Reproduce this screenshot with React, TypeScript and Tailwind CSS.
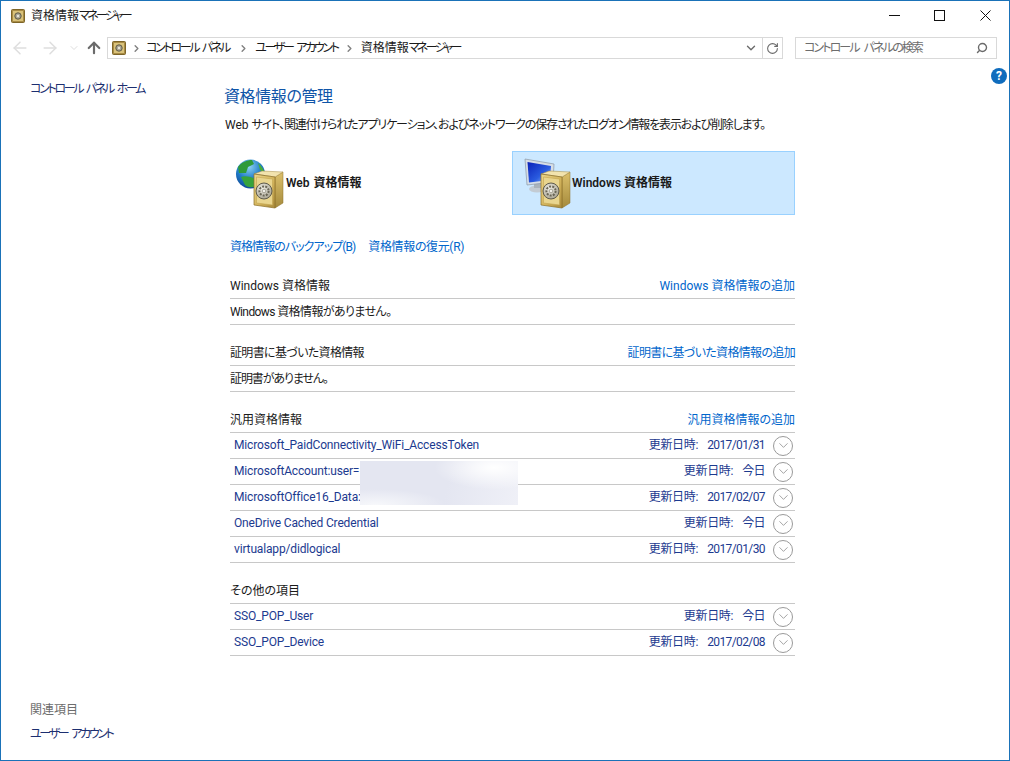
import { ArrowLeft, ArrowRight, ArrowUp, ChevronDown, ChevronRight, RotateCw, Search } from "lucide-react";
import type { ReactNode } from "react";

type Row = { name: string; date: string };

const generic: Row[] = [
  { name: "Microsoft_PaidConnectivity_WiFi_AccessToken", date: "2017/01/31" },
  { name: "MicrosoftAccount:user=", date: "今日" },
  { name: "MicrosoftOffice16_Data:", date: "2017/02/07" },
  { name: "OneDrive Cached Credential", date: "今日" },
  { name: "virtualapp/didlogical", date: "2017/01/30" },
];

const others: Row[] = [
  { name: "SSO_POP_User", date: "今日" },
  { name: "SSO_POP_Device", date: "2017/02/08" },
];

// Kana in the original UI font is much narrower than in Noto
function Kana({ children }: { children: ReactNode }) {
  return <span className="tracking-[-2.3px] [word-spacing:3px]">{children}</span>;
}

function AppName() {
  return (
    <>
      資格情報<span className="tracking-[-2.6px]">マネージャー</span>
    </>
  );
}

function SmallSafe() {
  return (
    <svg width="14" height="14" viewBox="0 0 14 14" className="shrink-0">
      <rect x="0.5" y="0.5" width="13" height="13" rx="1" fill="#a98c45" stroke="#7d6528" />
      <rect x="2" y="2" width="10" height="10" fill="#d9c27a" />
      <circle cx="7" cy="7" r="3.2" fill="#a9a594" stroke="#5f5a45" />
      <circle cx="7" cy="7" r="1.2" fill="#e8e6da" />
    </svg>
  );
}

function BigSafe() {
  return (
    <g>
      <path d="M40 21 L48 16 L48 47 L40 52 Z" fill="url(#safeSide)" stroke="#8c7029" strokeWidth="0.5" />
      <path d="M19 18 L27 15 L48 16 L40 21 Z" fill="#f2e3ae" stroke="#a58a40" strokeWidth="0.5" />
      <path d="M19 18 L40 21 L40 52 L19 49 Z" fill="url(#safeFront)" stroke="#8c7029" strokeWidth="0.7" />
      <path d="M21.5 21 L37.5 23 L37.5 49 L21.5 47 Z" fill="#e9d58e" stroke="#c3a551" strokeWidth="0.6" />
      <circle cx="29" cy="35" r="8" fill="url(#dial)" stroke="#5f5b4c" strokeWidth="1" />
      <circle cx="29" cy="35" r="4.6" fill="none" stroke="#6a6656" strokeWidth="2" strokeDasharray="2 1.2" />
      <circle cx="29" cy="35" r="1.8" fill="#f2f1ea" stroke="#6a6656" strokeWidth="0.5" />
    </g>
  );
}

function Defs() {
  return (
    <defs>
      <linearGradient id="safeFront" x1="0" y1="0" x2="1" y2="1">
        <stop offset="0" stopColor="#ecd68c" />
        <stop offset="0.55" stopColor="#d3b45c" />
        <stop offset="1" stopColor="#a98a3a" />
      </linearGradient>
      <linearGradient id="safeSide" x1="0" y1="0" x2="0" y2="1">
        <stop offset="0" stopColor="#dcc06c" />
        <stop offset="1" stopColor="#a58a3c" />
      </linearGradient>
      <radialGradient id="dial" cx="0.4" cy="0.35" r="0.8">
        <stop offset="0" stopColor="#f1f0e8" />
        <stop offset="1" stopColor="#9a9582" />
      </radialGradient>
      <radialGradient id="sea" cx="0.45" cy="0.25" r="0.85">
        <stop offset="0" stopColor="#8fd2f2" />
        <stop offset="0.5" stopColor="#1f7cc8" />
        <stop offset="1" stopColor="#0c3a8a" />
      </radialGradient>
      <linearGradient id="screen" x1="0" y1="0" x2="1" y2="1">
        <stop offset="0" stopColor="#0a20b8" />
        <stop offset="0.6" stopColor="#2a5ce0" />
        <stop offset="1" stopColor="#a4c2f6" />
      </linearGradient>
    </defs>
  );
}

function WebIcon() {
  return (
    <svg width="50" height="54" viewBox="0 0 50 54" className="shrink-0">
      <Defs />
      <circle cx="15.5" cy="18" r="14.5" fill="url(#sea)" />
      <path d="M3 11 C7 6 12 4 17 4 L19 8 L13 11 L11 17 L4 17 Z" fill="#2f9a3a" />
      <path d="M6 21 C12 19 20 22 26 27 C22 31 14 33 10 29 Z" fill="#37a33c" />
      <path d="M23 7 C27 10 29 14 30 18 L25 14 Z" fill="#46ad3e" />
      <BigSafe />
    </svg>
  );
}

function WindowsIcon() {
  return (
    <svg width="50" height="54" viewBox="0 0 50 54" className="shrink-0">
      <Defs />
      <ellipse cx="15" cy="33" rx="8" ry="3.5" fill="#c3cbd3" />
      <path d="M12 26 L19 26 L19 32 L12 32 Z" fill="#aab3bc" />
      <path d="M3 3 L32 8 L31 26 L5 29 Z" fill="#d6dde6" stroke="#8a98a8" strokeWidth="0.7" />
      <path d="M5.5 6 L29 10 L28 24 L7 26.5 Z" fill="url(#screen)" />
      <BigSafe />
    </svg>
  );
}

function ExpandButton() {
  return (
    <span className="flex h-[20px] w-[20px] items-center justify-center rounded-full border border-[#9a9a9a] bg-white">
      <ChevronDown size={15} strokeWidth={1.1} className="text-[#7a7a7a]" />
    </span>
  );
}

function CredRow({ row }: { row: Row }) {
  return (
    <div className="flex h-[26px] items-center border-b border-[#c8c8c8] pl-1 pr-[2px] text-[#1c3a8f]">
      <span className="mb-[2px] flex-1 tracking-[-0.16px]">{row.name}</span>
      <span className="mb-[2px] mr-[8px] flex w-[120px] justify-end whitespace-nowrap">
        <span className="mr-[9px] tracking-[-0.3px]">更新日時:</span>
        <span className="tracking-[-0.6px]">{row.date}</span>
      </span>
      <ExpandButton />
    </div>
  );
}

function SectionHead({ title, action, squeeze }: { title: string; action?: string; squeeze?: boolean }) {
  return (
    <div className={`flex h-[28px] items-end justify-between border-b border-[#c8c8c8] pb-[4px] ${squeeze ? "tracking-[-0.67px]" : ""}`}>
      <span className="text-[#1a1a1a]">{title}</span>
      {action && <span className="text-[#0066cc]">{action}</span>}
    </div>
  );
}

export default function App() {
  return (
    <div className="relative flex h-[761px] w-[1010px] flex-col overflow-hidden border border-[#1a72b8] bg-white font-['Roboto','Noto_Sans_CJK_JP',sans-serif] text-[12px] leading-4 text-[#1a1a1a] [font-feature-settings:'palt']">
      <div className="flex h-[30px] shrink-0 items-center pl-[10px]">
        <SmallSafe />
        <span className="ml-[6px]">
          <AppName />
        </span>
        <div className="mb-[2px] ml-auto flex items-center text-black">
          <svg width="11" height="11" viewBox="0 0 11 11" className="mr-[34px]">
            <path d="M0 5.5H11" stroke="#111" />
          </svg>
          <svg width="11" height="11" viewBox="0 0 11 11" className="mr-[35px]">
            <rect x="0.5" y="0.5" width="10" height="10" fill="none" stroke="#111" />
          </svg>
          <svg width="11" height="11" viewBox="0 0 11 11" className="mr-[18px]">
            <path d="M0.5 0.5L10.5 10.5M10.5 0.5L0.5 10.5" stroke="#111" />
          </svg>
        </div>
      </div>

      <div className="flex h-[34px] shrink-0 items-start pt-[6px]">
        <div className="flex h-[22px] w-[106px] shrink-0 items-center pl-[9px]">
          <ArrowLeft size={20} strokeWidth={1.8} className="shrink-0 text-[#dedede]" />
          <ArrowRight size={20} strokeWidth={1.8} className="ml-[10px] shrink-0 text-[#dedede]" />
          <ChevronDown size={12} strokeWidth={2} className="ml-[8px] shrink-0 text-[#dedede]" />
          <ArrowUp size={18} strokeWidth={2.9} className="ml-[5px] shrink-0 text-[#6b6b6b]" />
        </div>
        <div className="flex h-[22px] w-[676px] shrink-0 items-center border border-[#d9d9d9] pl-[4px]">
          <SmallSafe />
          <ChevronRight size={11} strokeWidth={3} className="ml-[5px] text-[#808080]" />
          <span className="ml-[4px]">
            <Kana>コントロール パネル</Kana>
          </span>
          <ChevronRight size={11} strokeWidth={3} className="ml-[9px] text-[#808080]" />
          <span className="ml-[6px]">
            <Kana>ユーザー アカウント</Kana>
          </span>
          <ChevronRight size={11} strokeWidth={3} className="ml-[6px] text-[#808080]" />
          <span className="ml-[6px]">
            <AppName />
          </span>
          <div className="ml-auto flex h-full items-center">
            <ChevronDown size={14} strokeWidth={2.4} className="mr-[4px] text-[#6b6b6b]" />
            <div className="flex h-full w-[20px] items-center justify-center border-l border-[#d9d9d9]">
              <RotateCw size={13} strokeWidth={2} className="text-[#6b6b6b]" />
            </div>
          </div>
        </div>
        <div className="ml-[12px] flex h-[22px] w-[202px] shrink-0 items-center justify-between border border-[#d9d9d9] pl-[8px] pr-[8px] text-[#6d6d6d]">
          <span className="tracking-[-1.9px] [word-spacing:4px]">コントロール パネルの検索</span>
          <Search size={12} strokeWidth={2.8} className="-scale-x-100 text-[#6b6b6b]" />
        </div>
      </div>

      <div className="relative flex min-h-0 flex-1">
        <aside className="flex w-[224px] shrink-0 flex-col justify-between pb-[18px] pl-[29px] pt-[16px]">
          <span className="text-[#1c2f70]">
            <Kana>コントロール パネル ホーム</Kana>
          </span>
          <div className="flex flex-col gap-2">
            <span className="text-[#6d6d6d]">関連項目</span>
            <span className="text-[#1c2f70]">
              <Kana>ユーザー アカウント</Kana>
            </span>
          </div>
        </aside>

        <main className="w-[572px] shrink-0 pt-[21px]">
          <h1 className="-ml-px text-[16px] leading-[22px] tracking-[-0.4px] text-[#0f55a8]">資格情報の管理</h1>
          <p className="mt-[9px] whitespace-nowrap tracking-[-1.14px]">
            <span className="tracking-normal">Web </span>
            サイト、関連付けられたアプリケーション、およびネットワークの保存されたログオン情報を表示および削除します。
          </p>

          <div className="mt-[18px] flex h-[64px] gap-[5px] font-semibold">
            <div className="flex w-[282px] items-center pl-[10px]">
              <WebIcon />
              <span className="ml-px [word-spacing:1px]">Web 資格情報</span>
            </div>
            <div className="flex w-[283px] items-center border border-[#99d1ff] bg-[#cce8ff] pl-[9px]">
              <WindowsIcon />
              <span>Windows 資格情報</span>
            </div>
          </div>

          <div className="ml-[5px] w-[565px]">
            <div className="mt-[24px] flex gap-[13px] text-[#0066cc]">
              <span className="tracking-[-0.95px]">資格情報のバックアップ(B)</span>
              <span className="tracking-[-0.35px]">資格情報の復元(R)</span>
            </div>

            <section className="mt-[16px]">
              <SectionHead title="Windows 資格情報" action="Windows 資格情報の追加" />
              <div className="flex h-[26px] items-center border-b border-[#c8c8c8] tracking-[-0.6px]">Windows 資格情報がありません。</div>
            </section>

            <section className="mt-[13px]">
              <SectionHead title="証明書に基づいた資格情報" action="証明書に基づいた資格情報の追加" squeeze />
              <div className="flex h-[26px] items-center border-b border-[#c8c8c8] tracking-[-1.1px]">証明書がありません。</div>
            </section>

            <section className="mt-[13px]">
              <SectionHead title="汎用資格情報" action="汎用資格情報の追加" />
              {generic.map((row) => (
                <CredRow key={row.name} row={row} />
              ))}
            </section>

            <section className="mt-[13px]">
              <SectionHead title="その他の項目" />
              {others.map((row) => (
                <CredRow key={row.name} row={row} />
              ))}
            </section>
          </div>
        </main>

        <div className="ml-[194px] mt-[3px] flex h-4 w-4 shrink-0 items-center justify-center rounded-full bg-[#0f6cbd] text-[12px] font-bold text-white">?</div>

        {/* blurred-out account names */}
        <div className="absolute left-[359px] top-[396px] h-[44px] w-[158px] bg-[radial-gradient(ellipse_60px_22px_at_85%_15%,#ffffff_0%,#ffffff00_100%),radial-gradient(ellipse_70px_16px_at_10%_100%,#f7f8fb_0%,#f7f8fb00_100%),linear-gradient(100deg,#e4e6f1_55%,#eff0f7_100%)]" />
      </div>
    </div>
  );
}
